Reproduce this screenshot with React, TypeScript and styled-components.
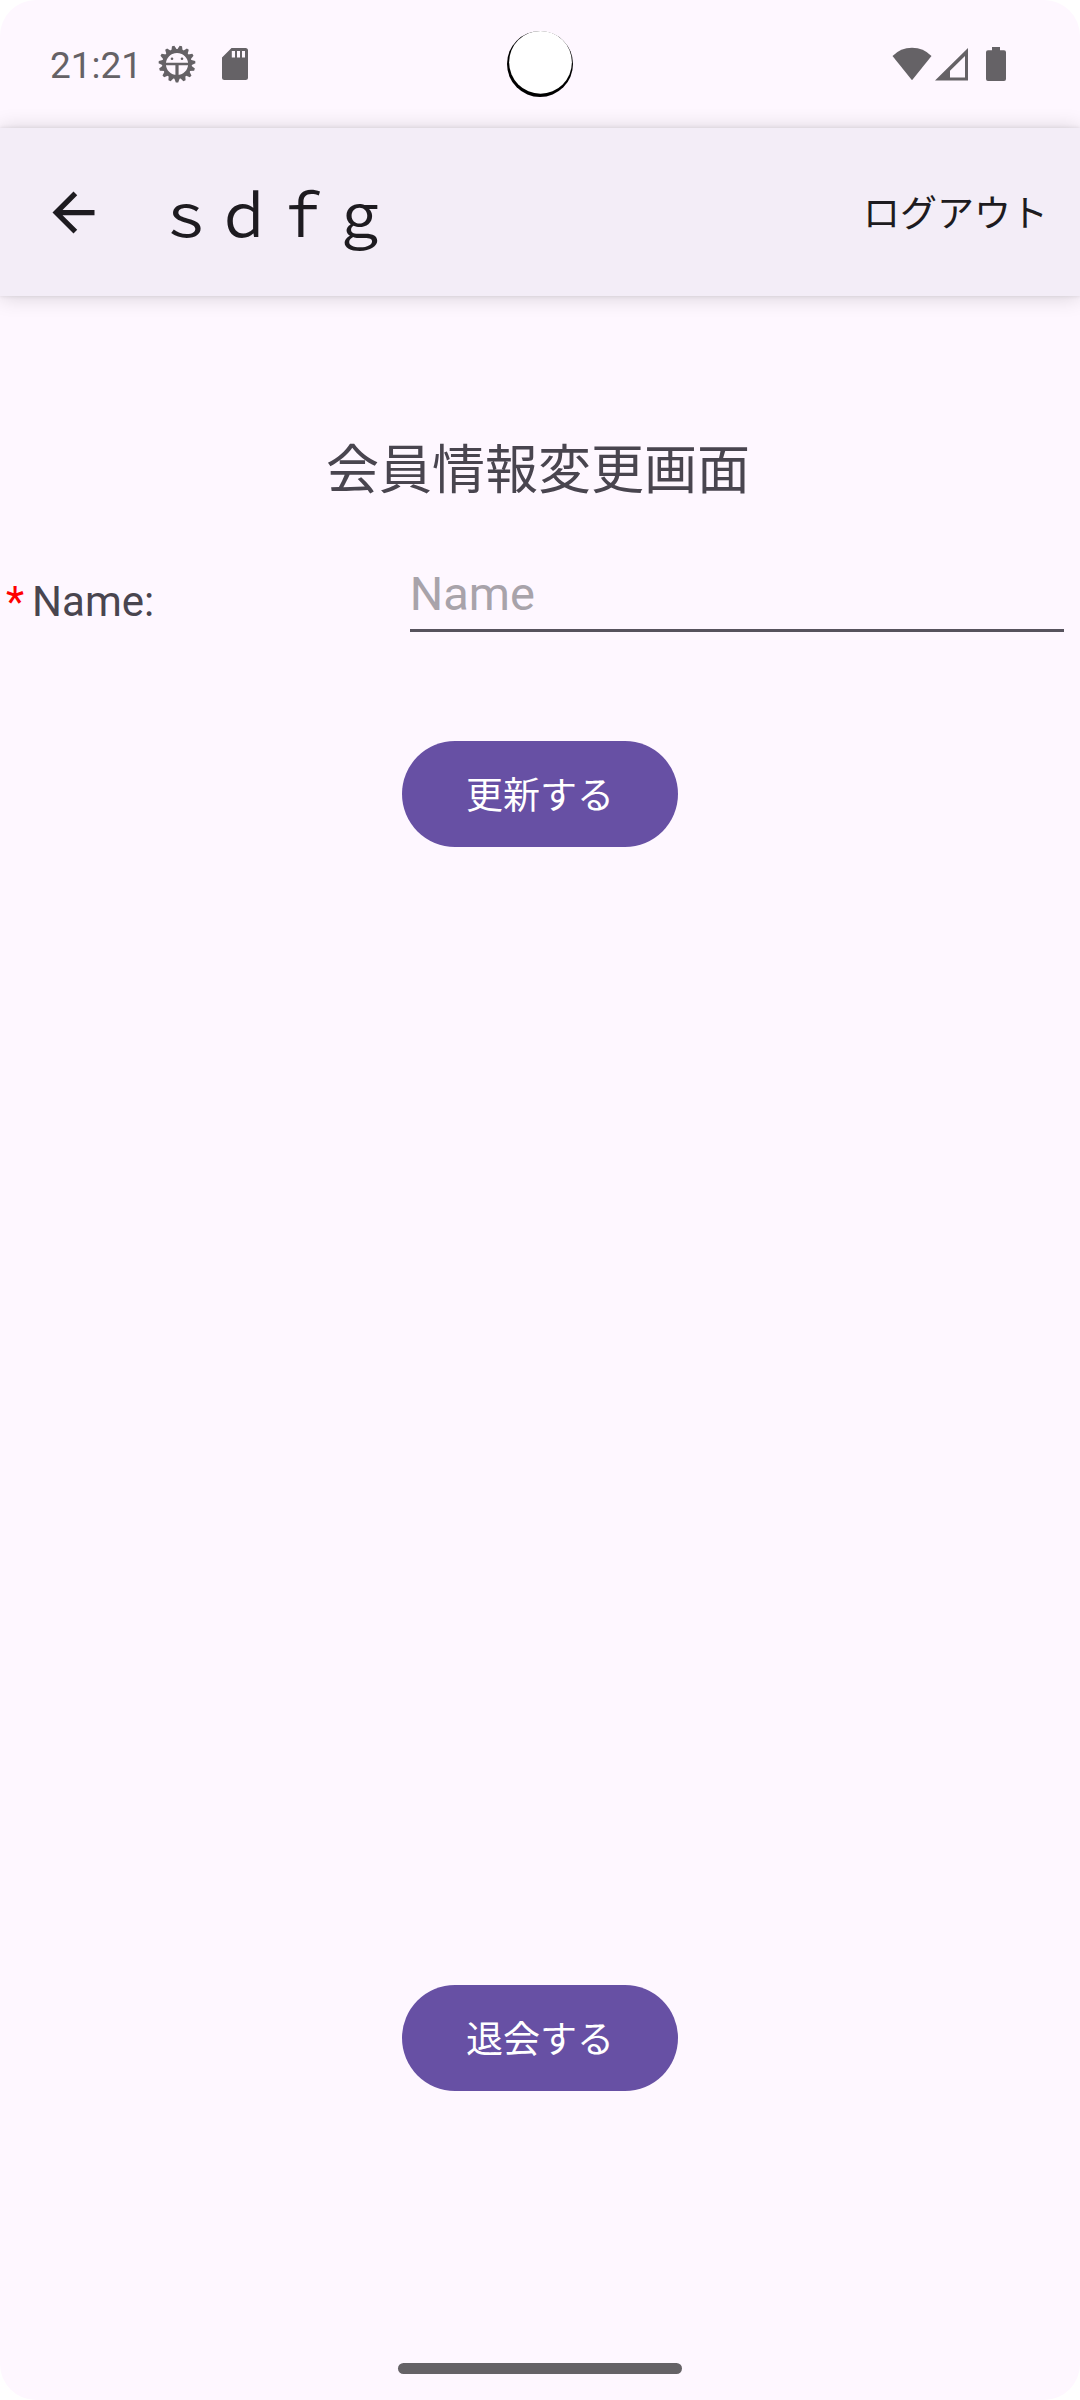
import React from "react";
import styled, { createGlobalStyle } from "styled-components";

const GlobalStyle = createGlobalStyle`
  *, *::before, *::after { box-sizing: border-box; }
  html { background: #ffffff; }
  body { margin: 0; }
  button, input { font: inherit; }
`;

const Page = styled.div`
  display: flex;
  flex-direction: column;
  min-height: 100vh;
  overflow: hidden;
  border-radius: 36px;
  background: #fef7ff;
  color: #49454f;
  font-family: Roboto, "Noto Sans CJK JP", sans-serif;
`;

const StatusBar = styled.div`
  display: grid;
  grid-template-columns: 1fr auto 1fr;
  align-items: center;
  height: 128px;
  padding: 0 74px 0 50px;
  color: #656266;
`;

const StatusGroup = styled.div<{ $end?: boolean }>`
  display: flex;
  align-items: center;
  justify-content: ${(p) => (p.$end ? "flex-end" : "flex-start")};
`;

const Clock = styled.time`
  margin-right: 16px;
  padding-top: 4px;
  font-size: 37px;
  line-height: 44px;
`;

const Icon = styled.svg<{ $gap?: number }>`
  display: block;
  flex: none;
  margin-left: ${(p) => p.$gap ?? 0}px;
`;

const Camera = styled.svg`
  display: block;
  margin-left: 24px;
`;

const AppBar = styled.header`
  display: flex;
  align-items: center;
  height: 168px;
  padding: 0 32px 0 42px;
  background: #f3edf7;
  color: #1d1b20;
  box-shadow: 0 1px 20px rgba(0, 0, 0, 0.16), 0 0 4px rgba(0, 0, 0, 0.1);
`;

const BackButton = styled.button`
  display: flex;
  padding: 0;
  border: 0;
  background: none;
  color: inherit;
  cursor: pointer;
`;

const TextButton = styled.button`
  padding: 6px 0 0;
  border: 0;
  background: none;
  color: inherit;
  font-size: 37px;
  line-height: 54px;
  cursor: pointer;
`;

const Title = styled.h1`
  flex: 1;
  margin: 0 0 0 52px;
  padding-top: 10px;
  font-size: 58px;
  font-weight: 400;
  line-height: 84px;
`;

const Content = styled.main`
  display: flex;
  flex: 1;
  flex-direction: column;
  align-items: center;
  padding: 136px 0 272px;
`;

const Heading = styled.h2`
  margin: 0;
  padding-right: 4px;
  font-size: 53px;
  font-weight: 400;
  line-height: 78px;
`;

const Form = styled.form`
  display: flex;
  flex-direction: column;
  align-items: center;
  width: 100%;
  margin-top: 44px;
`;

const Field = styled.div`
  display: flex;
  align-items: center;
  width: 100%;
  padding-right: 16px;
`;

const Label = styled.label`
  flex: 0 0 38.5%;
  padding: 18px 0 0 6px;
  font-size: 42px;
  line-height: 50px;
`;

const Required = styled.span`
  margin-right: 8px;
  color: #ff0000;
`;

const TextInput = styled.input`
  flex: 1;
  min-width: 0;
  height: 78px;
  padding: 4px 0 0;
  border: 0;
  border-bottom: 3px solid #57535d;
  border-radius: 0;
  outline: 0;
  background: transparent;
  color: #1d1b20;
  font-size: 47px;
  &::placeholder { color: #a8a3aa; opacity: 1; }
`;

const PillButton = styled.button<{ $top?: string }>`
  height: 106px;
  margin-top: ${(p) => p.$top ?? "0"};
  padding: 6px 64px 0;
  border: 0;
  border-radius: 53px;
  background: #6750a4;
  color: #ffffff;
  font-size: 37px;
  line-height: 54px;
  cursor: pointer;
`;

const HomeBar = styled.div`
  align-self: center;
  width: 284px;
  height: 11px;
  margin-bottom: 26px;
  border-radius: 6px;
  background: #656266;
`;

const teeth = Array.from({ length: 15 }, (_, i) => 180 + (i * 360) / 15);

function BugIcon() {
  return (
    <Icon width="38" height="38" viewBox="-19 -19 38 38" fill="currentColor" aria-hidden="true">
      {teeth.map((a) => (
        <path key={a} d="M-3.2 -13 L-1.2 -18.4 H1.2 L3.2 -13 Z" transform={`rotate(${a})`} />
      ))}
      <circle r="13" fill="none" stroke="currentColor" strokeWidth="3.8" />
      <path d="M-12-1.2H12V1.2H-12ZM-1.6 0H1.6V12H-1.6Z" />
      <path d="M-8-9Q0-14 8-9L6-12Q0-15-6-12Z" />
      <circle cx="-5" cy="-5.2" r="1.3" />
      <circle cx="5" cy="-5.2" r="1.3" />
    </Icon>
  );
}

function SdCardIcon() {
  return (
    <Icon $gap={26} width="26" height="32" viewBox="0 0 26 32" fill="currentColor" aria-hidden="true">
      <path
        fillRule="evenodd"
        d="M9.5 0H23.5Q26 0 26 2.5V29.5Q26 32 23.5 32H2.5Q0 32 0 29.5V9.5ZM9.8 3V9.6H13V3ZM15 3V9.6H18V3ZM20 3V9.6H23V3Z"
      />
    </Icon>
  );
}

export default function App() {
  return (
    <Page>
      <GlobalStyle />
      <StatusBar>
        <StatusGroup>
          <Clock>21:21</Clock>
          <BugIcon />
          <SdCardIcon />
        </StatusGroup>
        <Camera width="68" height="68" viewBox="0 0 68 68" aria-hidden="true">
          <circle cx="34" cy="34" r="33" fill="#000" />
          <circle cx="34.5" cy="32.3" r="31.4" fill="#fff" />
        </Camera>
        <StatusGroup $end>
          <Icon width="40" height="34" viewBox="0 0 40 34" fill="currentColor" aria-hidden="true">
            <path d="M0.5 9Q8.5 0.7 20 0.7T39.5 9L20 33.3Z" />
          </Icon>
          <Icon $gap={3} width="33" height="34" viewBox="0 0 33 34" aria-hidden="true">
            <path
              fill="currentColor"
              fillRule="evenodd"
              d="M0 33.5 33 1V33.5ZM15 30.5H30V9L15 23.7Z"
            />
          </Icon>
          <Icon $gap={18} width="20" height="34" viewBox="0 0 20 34" fill="currentColor" aria-hidden="true">
            <path d="M6 0H14V3.3H18Q20 3.3 20 5.3V32Q20 34 18 34H2Q0 34 0 32V5.3Q0 3.3 2 3.3H6Z" />
          </Icon>
        </StatusGroup>
      </StatusBar>

      <AppBar>
        <BackButton type="button" aria-label="戻る">
          <Icon width="63" height="63" viewBox="0 0 24 24" fill="currentColor" aria-hidden="true">
            <path d="M20 11H7.83l5.59-5.59L12 4l-8 8 8 8 1.41-1.41L7.83 13H20v-2z" />
          </Icon>
        </BackButton>
        <Title>ｓｄｆｇ</Title>
        <TextButton type="button">ログアウト</TextButton>
      </AppBar>

      <Content>
        <Heading>会員情報変更画面</Heading>
        <Form onSubmit={(e) => e.preventDefault()}>
          <Field>
            <Label htmlFor="member-name">
              <Required>*</Required>Name:
            </Label>
            <TextInput id="member-name" type="text" placeholder="Name" required />
          </Field>
          <PillButton type="submit" $top="109px">
            更新する
          </PillButton>
        </Form>
        <PillButton type="button" $top="auto">
          退会する
        </PillButton>
      </Content>
      <HomeBar />
    </Page>
  );
}
